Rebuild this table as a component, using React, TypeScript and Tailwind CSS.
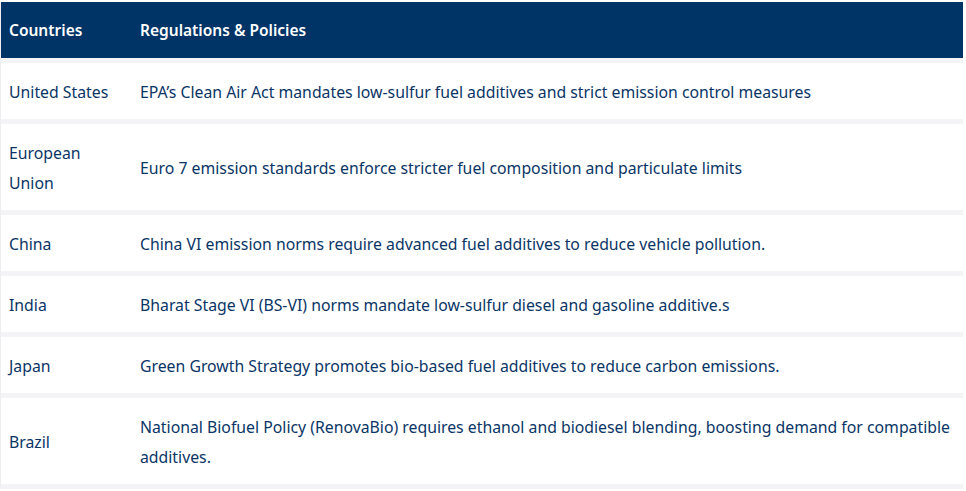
import React from 'react';

type Row = { country: string; policy: string };

const rows: Row[] = [
  { country: 'United States', policy: 'EPA’s Clean Air Act mandates low-sulfur fuel additives and strict emission control measures' },
  { country: 'European Union', policy: 'Euro 7 emission standards enforce stricter fuel composition and particulate limits' },
  { country: 'China', policy: 'China VI emission norms require advanced fuel additives to reduce vehicle pollution.' },
  { country: 'India', policy: 'Bharat Stage VI (BS-VI) norms mandate low-sulfur diesel and gasoline additive.s' },
  { country: 'Japan', policy: 'Green Growth Strategy promotes bio-based fuel additives to reduce carbon emissions.' },
  {
    country: 'Brazil',
    policy: 'National Biofuel Policy (RenovaBio) requires ethanol and biodiesel blending, boosting demand for compatible additives.',
  },
];

export default function App() {
  return (
    <div className="w-[966px] h-[491px] overflow-hidden bg-white pt-[2px] font-['Noto_Sans',sans-serif]">
      <div className="w-[963px] border-l border-[#eeeef2] bg-[#f4f4f6] pb-[5px]">
        {/* Header */}
        <div className="flex h-[56px] items-center bg-[#003366] pt-[2px] text-[15.5px] font-semibold text-white">
          <div className="w-[131px] shrink-0 pl-2">Countries</div>
          <div className="pl-2">Regulations &amp; Policies</div>
        </div>

        {rows.map((r) => (
          <div
            key={r.country}
            className="mt-[5px] flex items-center bg-white pt-[14px] pb-[12px] text-[15.8px] leading-[30px] text-[#0a3566]"
          >
            <div className="w-[131px] shrink-0 pl-2 pr-3">{r.country}</div>
            <div className="pl-2 pr-2">{r.policy}</div>
          </div>
        ))}
      </div>
    </div>
  );
}
